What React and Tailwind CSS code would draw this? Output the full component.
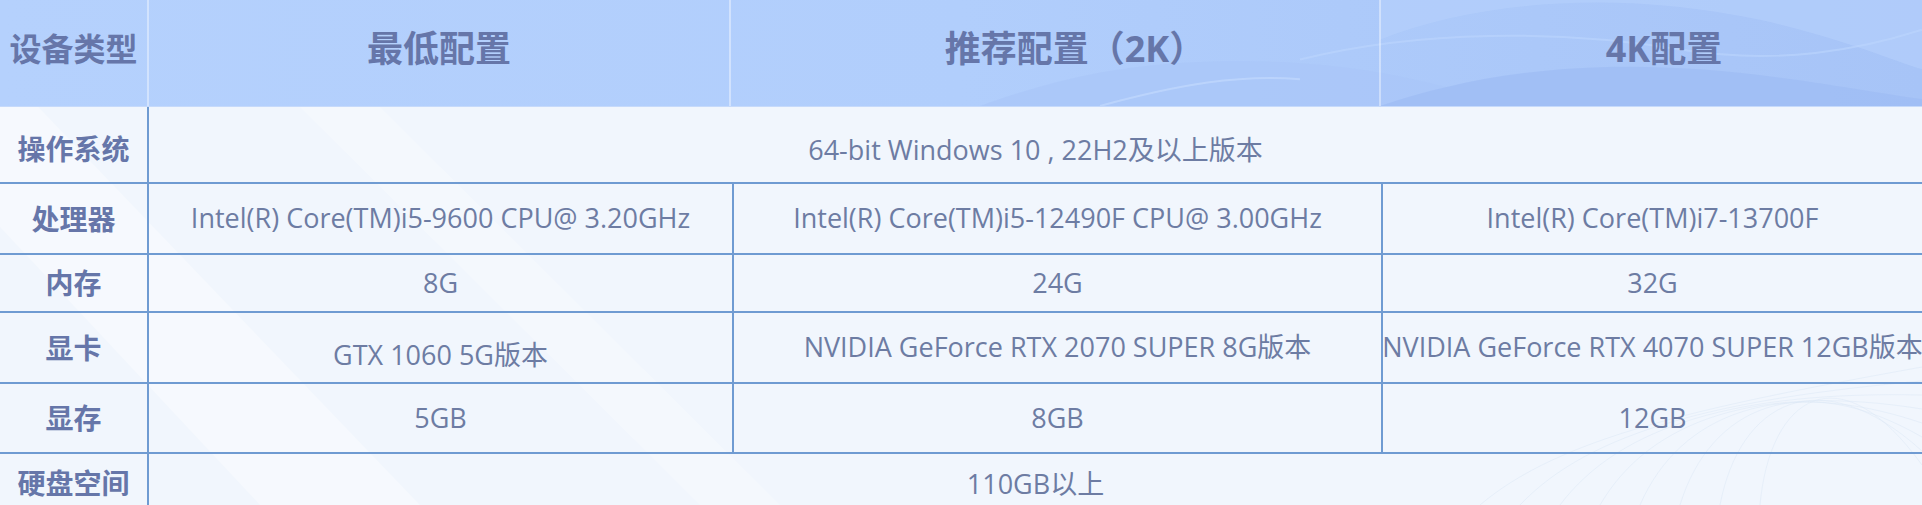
const rows = [
  {
    label: "处理器",
    h: "h-[71px]",
    cells: [
      "Intel(R) Core(TM)i5-9600 CPU@ 3.20GHz",
      "Intel(R) Core(TM)i5-12490F CPU@ 3.00GHz",
      "Intel(R) Core(TM)i7-13700F",
    ],
  },
  { label: "内存", h: "h-[58px]", cells: ["8G", "24G", "32G"] },
  {
    label: "显卡",
    h: "h-[71px]",
    cells: [
      "GTX 1060 5G版本",
      "NVIDIA GeForce RTX 2070 SUPER 8G版本",
      "NVIDIA GeForce RTX 4070 SUPER 12GB版本",
    ],
  },
  { label: "显存", h: "h-[70px]", cells: ["5GB", "8GB", "12GB"] },
];

const widths = ["w-[585px]", "w-[649px]", "w-[539px]"];

function HeaderWaves() {
  return (
    <svg className="absolute inset-0 h-full w-full" viewBox="0 0 1922 107" preserveAspectRatio="none">
      <path d="M980 107 C1080 70 1160 60 1260 62 C1380 64 1450 90 1520 107 Z" fill="#a9c6f8" opacity="0.7" />
      <path d="M1380 107 C1460 80 1560 60 1700 70 C1800 78 1880 95 1922 100 L1922 107 Z" fill="#9fbdf4" opacity="0.8" />
      <path d="M1380 40 C1480 0 1620 -10 1760 20 C1840 38 1890 60 1922 70 L1922 0 L1380 0 Z" fill="#b6d1fc" opacity="0.6" />
      <path d="M1300 60 C1420 30 1560 30 1680 50 C1780 66 1860 50 1922 30" stroke="#bcd5fd" strokeWidth="2" fill="none" opacity="0.6" />
      <path d="M1100 107 C1180 85 1240 75 1300 80" stroke="#c2d8fd" strokeWidth="2" fill="none" opacity="0.7" />
    </svg>
  );
}

function BodyDecor() {
  return (
    <svg className="absolute left-0 top-[107px] h-[398px] w-[1922px]" viewBox="0 0 1922 398">
      <path d="M0 120 L260 398 L420 398 L0 -40 Z" fill="#ffffff" opacity="0.35" />
      <path d="M300 0 L700 398 L780 398 L380 0 Z" fill="#ffffff" opacity="0.25" />
      {[0, 1, 2, 3, 4, 5, 6, 7].map((i) => (
        <path
          key={i}
          d={`M${1480 + i * 40} 398 C${1560 + i * 30} ${330 - i * 6} ${1700 + i * 20} ${300 - i * 8} 1922 ${260 + i * 14}`}
          stroke="#dce7f6"
          strokeWidth="1"
          fill="none"
          opacity="0.5"
        />
      ))}
    </svg>
  );
}

export default function App() {
  return (
    <div className="relative h-[505px] w-[1922px] overflow-hidden bg-[#f1f6fd] font-['Open_Sans','Noto_Sans_CJK_SC',sans-serif] text-[#6d7ca3]">
      <BodyDecor />

      {/* Header */}
      <div className="relative flex h-[107px] bg-[linear-gradient(90deg,#b5d1fd_0%,#b1cefc_50%,#a7c4f7_100%)] border-b border-[#c6dafb]">
        <HeaderWaves />
        <div className="relative flex w-[149px] shrink-0 items-center justify-center border-r-2 border-white/40 pb-2 text-[32px] font-bold text-[#6676a9]">
          设备类型
        </div>
        <div className="relative flex w-[582px] shrink-0 items-center justify-center border-r-2 border-white/40 pb-2 text-[36px] font-bold text-[#6676a9]">
          最低配置
        </div>
        <div className="relative flex w-[650px] shrink-0 items-center justify-center border-r-2 border-white/40 pb-2 pl-10 text-[36px] font-bold text-[#6676a9]">
          推荐配置（2K）
        </div>
        <div className="relative flex w-[566px] shrink-0 items-center justify-center pb-2 text-[36px] font-bold text-[#6676a9]">
          4K配置
        </div>
      </div>

      {/* 操作系统 */}
      <div className="relative flex h-[75px]">
        <div className="flex w-[149px] shrink-0 items-center justify-center border-r-2 border-[#6f9bd2] pt-2 text-[28px] font-bold text-[#6676a9]">
          操作系统
        </div>
        <div className="flex flex-1 items-center justify-center pt-3 text-[27px] whitespace-nowrap">
          64-bit Windows 10 , 22H2及以上版本
        </div>
      </div>

      {rows.map((row) => (
        <div key={row.label} className={`relative flex border-t-2 border-[#6f9bd2] ${row.h}`}>
          <div className="flex w-[149px] shrink-0 items-center justify-center border-r-2 border-[#6f9bd2] text-[28px] font-bold text-[#6676a9]">
            {row.label}
          </div>
          {row.cells.map((c, i) => (
            <div
              key={i}
              className={`flex shrink-0 items-center justify-center text-[27px] whitespace-nowrap ${widths[i]} ${
                i < 2 ? "border-r-2 border-[#6f9bd2]" : ""
              } ${row.label === "显卡" && i === 0 ? "pt-4" : ""}`}
            >
              {c}
            </div>
          ))}
        </div>
      ))}

      {/* 硬盘空间 */}
      <div className="relative flex h-[70px] border-t-2 border-[#6f9bd2]">
        <div className="flex w-[149px] shrink-0 items-start justify-center border-r-2 border-[#6f9bd2] pt-[8px] text-[28px] font-bold text-[#6676a9]">
          硬盘空间
        </div>
        <div className="flex flex-1 items-start justify-center pt-[10px] text-[27px] whitespace-nowrap">
          110GB以上
        </div>
      </div>
    </div>
  );
}
